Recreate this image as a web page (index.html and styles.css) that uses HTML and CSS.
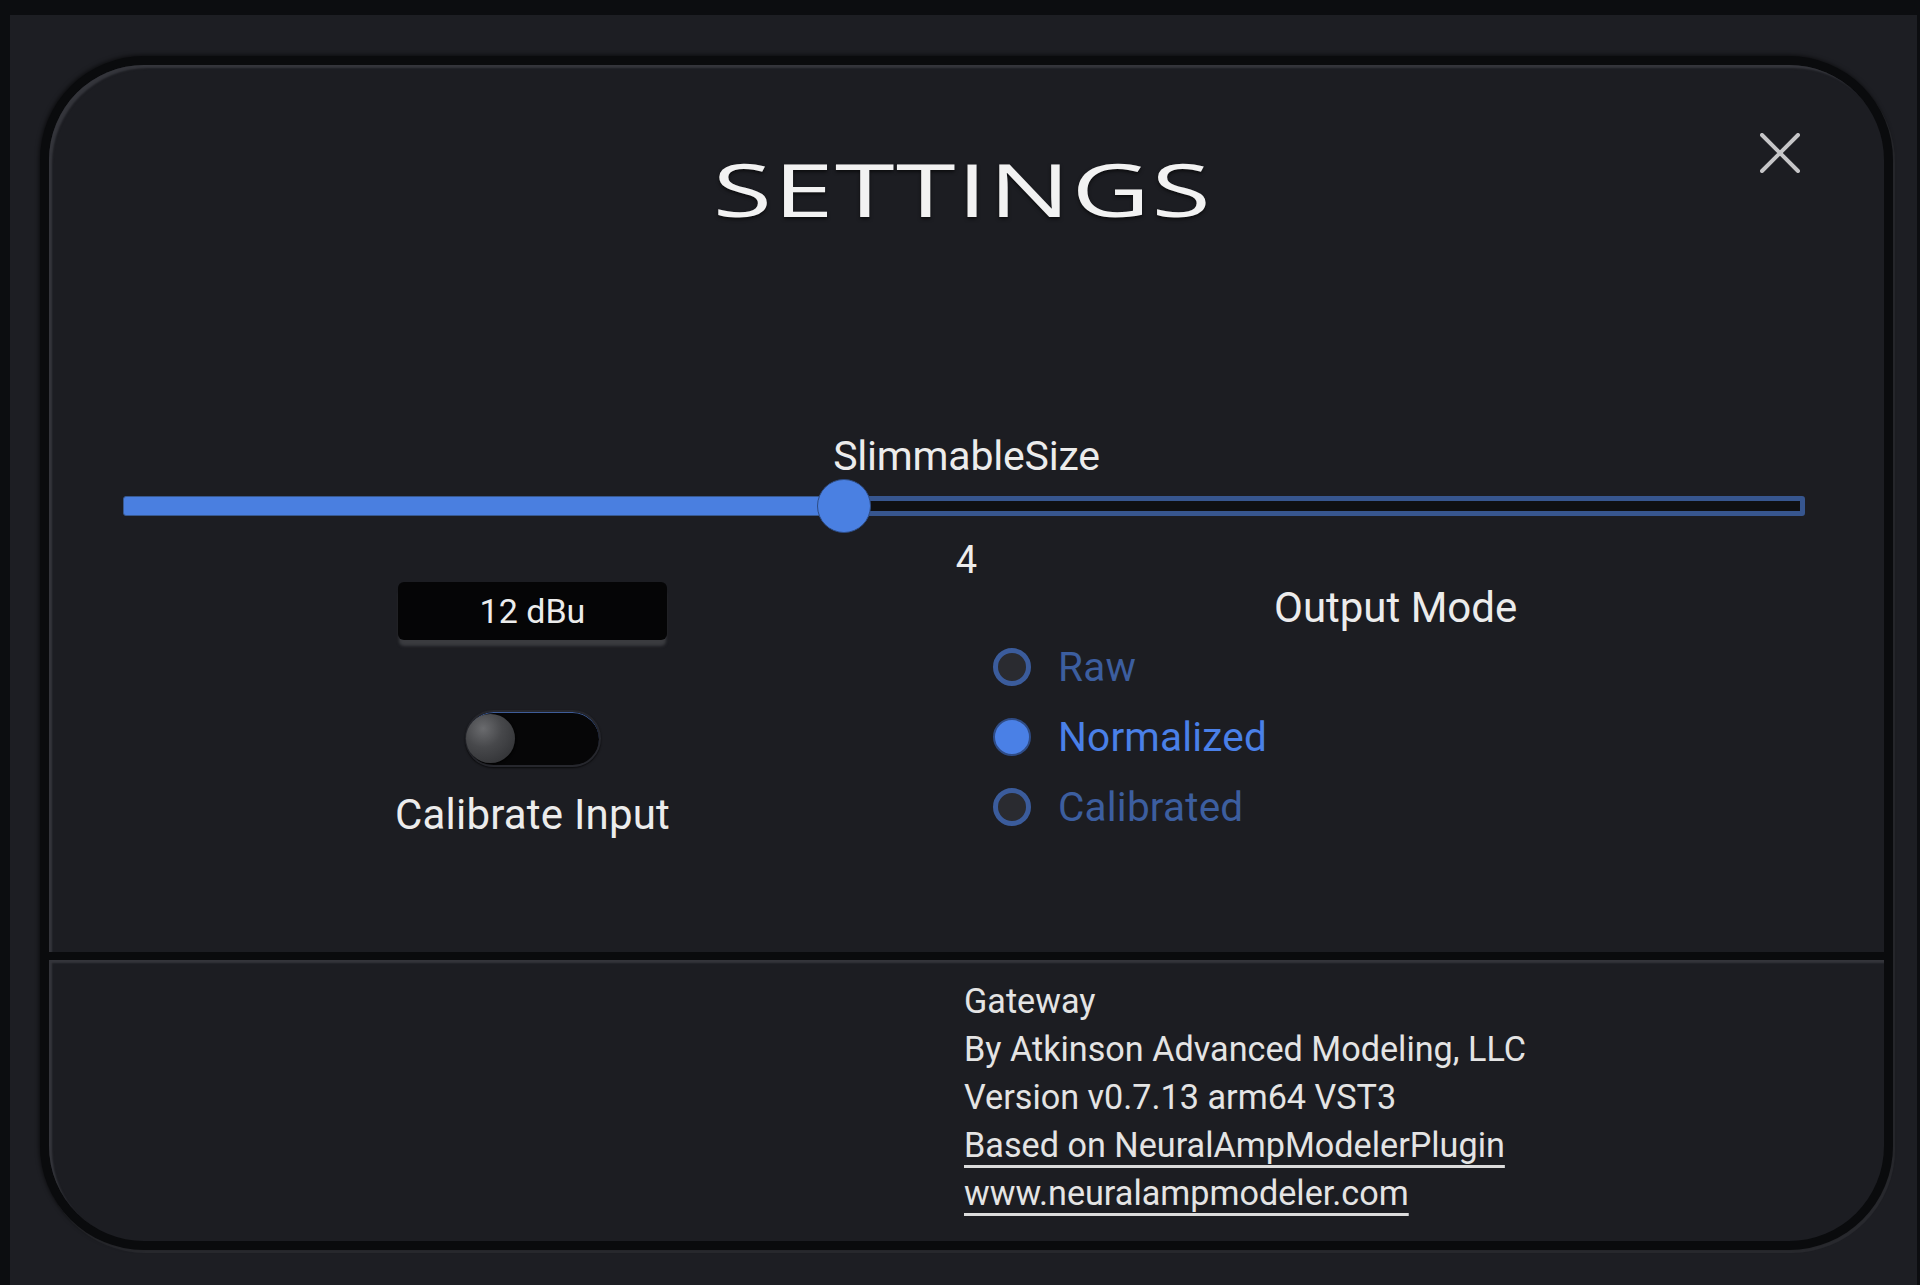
FILE: index.html
```html
<!DOCTYPE html>
<html>
<head>
<meta charset="utf-8">
<title>Settings</title>
<link rel="stylesheet" href="styles.css">
</head>
<body>
<div class="screen">
  <div class="panel">
    <section class="main">
      <button class="close" aria-label="Close">
        <svg viewBox="0 0 40 40" width="40" height="40"><path d="M2 2 L38 38 M38 2 L2 38" stroke="#c6c6c8" stroke-width="4" stroke-linecap="round" fill="none"/></svg>
      </button>
      <h1 class="title">SETTINGS</h1>
      <div class="size-label">SlimmableSize</div>
      <div class="slider">
        <div class="fill" style="width:721px"></div>
        <div class="thumb"></div>
        <div class="rest"></div>
      </div>
      <div class="value">4</div>
      <div class="controls">
        <div class="calib">
          <div class="dbu">12 dBu</div>
          <div class="toggle"><span class="knob"></span></div>
          <div class="label calib-label">Calibrate Input</div>
        </div>
        <div class="output">
          <div class="label out-label">Output Mode</div>
          <div class="radios">
            <div class="radio"><span class="dot"></span><span class="rtext">Raw</span></div>
            <div class="radio on"><span class="dot"></span><span class="rtext">Normalized</span></div>
            <div class="radio"><span class="dot"></span><span class="rtext">Calibrated</span></div>
          </div>
        </div>
      </div>
    </section>
    <section class="footer">
      <div>Gateway</div>
      <div>By Atkinson Advanced Modeling, LLC</div>
      <div>Version v0.7.13 arm64 VST3</div>
      <div><a class="link">Based on NeuralAmpModelerPlugin</a></div>
      <div><a class="link">www.neuralampmodeler.com</a></div>
    </section>
  </div>
</div>
</body>
</html>
```
FILE: styles.css
```css
* { box-sizing: border-box; margin: 0; padding: 0; }
html, body { width: 1920px; height: 1285px; overflow: hidden; background: #0c0d10; }
body { font-family: Roboto, "Liberation Sans", sans-serif; color: #ececec; }

.screen {
  height: 1285px;
  background: #1d1e23;
  border-top: 15px solid #0c0d10;
  border-left: 10px solid #0c0d10;
  border-right: 3px solid #0c0d10;
  padding-top: 41px;
  padding-left: 30px;
}

.panel {
  width: 1853px;
  height: 1194px;
  background: #0a0b0d;
  border-radius: 104px;
  padding: 9px;
  display: flex;
  flex-direction: column;
  gap: 8px;
  box-shadow: 2px 3px 1px rgba(255,255,255,0.06), -1px -1px 4px rgba(0,0,0,0.6);
}

.main {
  position: relative;
  height: 887px;
  background: #1c1d22;
  border-radius: 95px 95px 0 0;
  box-shadow: inset 4px 4px 2px -1px #34353b;
  padding-top: 92px;
}

.close {
  position: absolute;
  top: 68px;
  right: 84px;
  width: 40px;
  height: 40px;
  background: none;
  border: none;
  display: block;
}
.close svg { display: block; }

.title {
  width: fit-content;
  margin: -4px auto 0;
  font-family: "Open Sans", "DejaVu Sans", sans-serif;
  font-weight: 380;
  font-size: 73px;
  line-height: 72px;
  letter-spacing: 1px;
  padding-left: 1px;
  padding-right: 6px;
  color: #f2f2f2;
  transform: scaleX(1.48);
  text-shadow: 0 2px 3px rgba(0,0,0,0.6);
}

.size-label {
  margin-top: 207px;
  font-size: 41px;
  line-height: 48px;
  text-align: center;
  letter-spacing: -0.2px;
  color: #ececec;
}

.slider {
  margin: -1px 79px 0 74px;
  height: 54px;
  display: flex;
  align-items: center;
}
.fill {
  flex: none;
  height: 20px;
  background: #4a7fe0;
  border: 1px solid #38598f;
  border-radius: 3px 0 0 3px;
  margin-right: -27px;
}
.thumb {
  flex: none;
  position: relative;
  z-index: 1;
  width: 54px;
  height: 54px;
  border-radius: 50%;
  background: #4a80e2;
  border: 1px solid #2e4c84;
}
.rest {
  flex: 1;
  height: 20px;
  margin-left: -27px;
  background: #0f1013;
  border: 5px solid #37568f;
  border-radius: 0 3px 3px 0;
}

.value {
  margin-top: 5px;
  font-size: 38px;
  line-height: 44px;
  text-align: center;
  color: #ececec;
}

.controls {
  display: flex;
  align-items: flex-start;
}

.calib {
  margin-left: 349px;
  width: 269px;
  display: flex;
  flex-direction: column;
  align-items: center;
}
.dbu {
  width: 269px;
  height: 58px;
  background: #050506;
  border-radius: 6px;
  box-shadow: 0 7px 3px -1px #3a3b3f;
  font-size: 34px;
  line-height: 58px;
  text-align: center;
  color: #ececec;
}
.toggle {
  margin-top: 70px;
  width: 136px;
  height: 57px;
  border-radius: 29px;
  background: #060607;
  border: 2px solid #26272d;
  box-shadow: inset 0 1px 0 #3e5c98, 0 1px 2px rgba(0,0,0,0.7);
  display: flex;
  align-items: center;
}
.knob {
  width: 49px;
  height: 49px;
  margin-left: -1px;
  border-radius: 50%;
  background: radial-gradient(circle at 35% 30%, #6a6b6e 0%, #47484b 40%, #2a2b2e 100%);
  box-shadow: 1px 1px 2px rgba(0,0,0,0.8);
}
.label {
  font-size: 42px;
  line-height: 48px;
  color: #ececec;
  white-space: nowrap;
}
.calib-label { margin-top: 24px; letter-spacing: 0.2px; }

.output {
  margin-left: 326px;
  display: flex;
  flex-direction: column;
}
.out-label {
  margin-top: 2px;
  padding-left: 281px;
}
.radios {
  display: flex;
  flex-direction: column;
}
.radio {
  height: 70px;
  display: flex;
  align-items: center;
  gap: 27px;
  font-size: 40.5px;
  letter-spacing: 0.2px;
  color: #3c5e9f;
}
.dot {
  width: 38px;
  height: 38px;
  border-radius: 50%;
  border: 5px solid #3b5c9c;
  background: #2a2b30;
}
.radio.on { color: #4a80e8; }
.radio.on .dot {
  background: #4a80e6;
  border: 2px solid #2f4c86;
}

.footer {
  height: 281px;
  background: #1c1d22;
  border-radius: 0 0 95px 95px;
  box-shadow: inset 4px 4px 2px -1px #34353b;
  padding: 17px 0 0 915px;
  font-size: 34.2px;
  line-height: 48px;
  color: #e4e4e4;
}
.link {
  color: #e4e4e4;
  text-decoration: underline;
  text-decoration-thickness: 3px;
  text-underline-offset: 8px;
  text-decoration-color: #dcdcdc;
}
```
